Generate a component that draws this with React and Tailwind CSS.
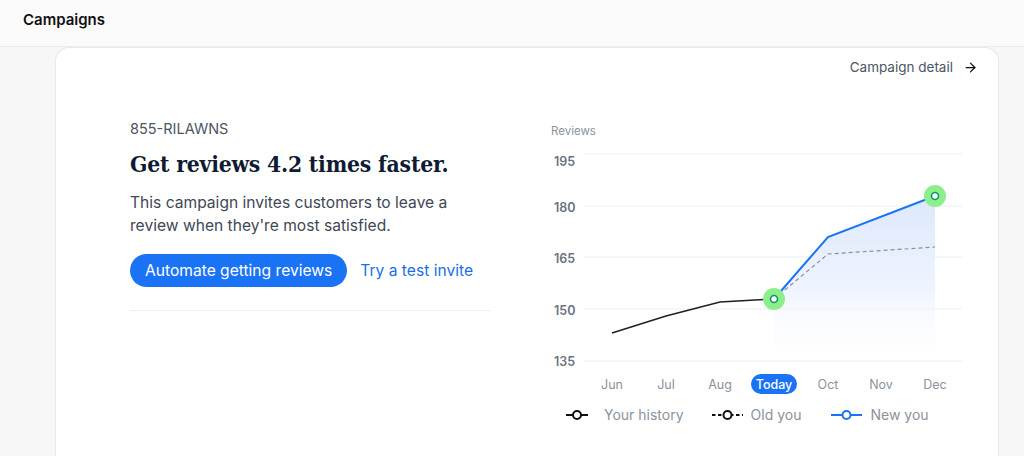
import { ArrowRight } from "lucide-react";

const OX = 545;
const OY = 120;

const yTicks = [
  { label: "195", line: 153, text: 160 },
  { label: "180", line: 205, text: 206 },
  { label: "165", line: 256, text: 257 },
  { label: "150", line: 308, text: 309 },
  { label: "135", line: 360, text: 360 },
];

const months = [
  { label: "Jun", x: 611 },
  { label: "Jul", x: 665 },
  { label: "Aug", x: 719 },
  { label: "Today", x: 773, today: true },
  { label: "Oct", x: 827 },
  { label: "Nov", x: 880 },
  { label: "Dec", x: 934 },
];

const history = [
  [611, 332],
  [665, 315],
  [719, 301],
  [773, 298],
];
const newYou = [
  [773, 298],
  [827, 236],
  [934, 195],
];
const oldYou = [
  [773, 298],
  [827, 253],
  [934, 246],
];

function pts(list) {
  return list.map(([x, y]) => `${x - OX},${y - OY}`).join(" ");
}

function Marker({ x, y }) {
  return (
    <g>
      <circle cx={x - OX} cy={y - OY} r="11" fill="#8cf08a" />
      <circle cx={x - OX} cy={y - OY} r="3.5" fill="#ffffff" stroke="#10936e" strokeWidth="1.6" />
    </g>
  );
}

function Chart() {
  const fill = [...newYou, [934, 345], [773, 345]];
  return (
    <svg width="430" height="280" viewBox="0 0 430 280" className="block">
      <defs>
        <linearGradient id="newFill" x1="0" y1="0" x2="0" y2="1">
          <stop offset="0" stopColor="#dde8fd" />
          <stop offset="0.6" stopColor="#eef3fe" />
          <stop offset="1" stopColor="#f8faff" stopOpacity="0.2" />
        </linearGradient>
      </defs>
      <text x="5" y="14" fontSize="11.5" fill="#8b929c" fontFamily="Inter, sans-serif">
        Reviews
      </text>
      {yTicks.map((t) => (
        <g key={t.label}>
          <line x1="38" x2="416" y1={t.line - OY} y2={t.line - OY} stroke="#e6effc" strokeWidth="1" />
          <text
            x="8"
            y={t.text - OY + 4.5}
            fontSize="12.5"
            fontWeight="600"
            fill="#6b7280"
            fontFamily="Inter, sans-serif"
          >
            {t.label}
          </text>
        </g>
      ))}
      <polygon points={pts(fill)} fill="url(#newFill)" />
      <polyline points={pts(history)} fill="none" stroke="#1f1f1f" strokeWidth="1.4" />
      <polyline points={pts(oldYou)} fill="none" stroke="#8a8f98" strokeWidth="1.2" strokeDasharray="4 3" />
      <polyline points={pts(newYou)} fill="none" stroke="#1a73f5" strokeWidth="2" />
      <Marker x={773} y={298} />
      <Marker x={934} y={195} />
      {months.map((m) =>
        m.today ? (
          <g key={m.label}>
            <rect x={750 - OX} y={373 - OY} width="46" height="20" rx="10" fill="#1a73f5" />
            <text
              x={m.x - OX}
              y={383 - OY + 4.5}
              textAnchor="middle"
              fontSize="12.5"
              fontWeight="500"
              fill="#ffffff"
              fontFamily="Inter, sans-serif"
            >
              {m.label}
            </text>
          </g>
        ) : (
          <text
            key={m.label}
            x={m.x - OX}
            y={383 - OY + 4.5}
            textAnchor="middle"
            fontSize="12.5"
            fill="#8b929c"
            fontFamily="Inter, sans-serif"
          >
            {m.label}
          </text>
        )
      )}
    </svg>
  );
}

function LegendIcon({ color, dashed, width }) {
  const mid = width / 2;
  return (
    <svg width={width} height="12" viewBox={`0 0 ${width} 12`}>
      <line
        x1="0"
        x2={width}
        y1="6"
        y2="6"
        stroke={color}
        strokeWidth="2"
        strokeDasharray={dashed ? "3.5 2.5" : undefined}
      />
      <circle cx={mid} cy="6" r="4" fill="#ffffff" stroke={color} strokeWidth="2" />
    </svg>
  );
}

export default function App() {
  return (
    <div className="h-[456px] overflow-hidden bg-[#f7f7f7] font-['Inter',sans-serif]">
      <header className="h-[47px] border-b border-[#ececec] bg-[#fafafa] px-[23px] pt-[9px]">
        <h1 className="text-[15px] font-semibold text-[#111]">Campaigns</h1>
      </header>

      <div className="ml-[55px] mr-[25px] h-[420px] rounded-t-[14px] border border-b-0 border-[#e8e8e8] bg-white">
        <div className="flex justify-end pr-[20px] pt-[9px]">
          <a className="flex items-center gap-2 text-[13.5px] text-[#4b5563]">
            Campaign detail
            <ArrowRight size={15} strokeWidth={2} className="ml-[2px] text-[#111]" />
          </a>
        </div>

        <div className="flex">
          <div className="ml-[74px] w-[361px] pt-[41px]">
            <p className="text-[14.5px] text-[#4b5563]">855-RILAWNS</p>
            <h2 className="mt-[7px] font-['DejaVu_Serif',serif] text-[22.7px] font-bold tracking-[-0.2px] text-[#0f1b33] [font-stretch:condensed]">
              Get reviews 4.2 times faster.
            </h2>
            <p className="mt-[10px] w-[330px] text-[15.6px] leading-[23px] text-[#3f4856]">
              This campaign invites customers to leave a review when they're most satisfied.
            </p>
            <div className="mt-[17px] flex items-center gap-[13px]">
              <button className="h-[33px] rounded-full bg-[#1a73f5] px-[15px] text-[15.6px] text-white">
                Automate getting reviews
              </button>
              <a className="text-[15.6px] text-[#1a6fe8]">Try a test invite</a>
            </div>
            <div className="mt-[23px] border-t border-[#efefef]" />
          </div>

          <div className="ml-[55px] flex flex-col pt-[44px]">
            <Chart />
            <div className="ml-[20px] mt-[3px] flex items-center text-[14px] text-[#8b929c]">
              <div className="flex items-center gap-[16px]">
                <LegendIcon color="#111" width={22} />
                <span>Your history</span>
              </div>
              <div className="ml-[28px] flex items-center gap-[8px]">
                <LegendIcon color="#111" dashed width={31} />
                <span>Old you</span>
              </div>
              <div className="ml-[30px] flex items-center gap-[8px]">
                <LegendIcon color="#1a73f5" width={31} />
                <span>New you</span>
              </div>
            </div>
          </div>
        </div>
      </div>
    </div>
  );
}
